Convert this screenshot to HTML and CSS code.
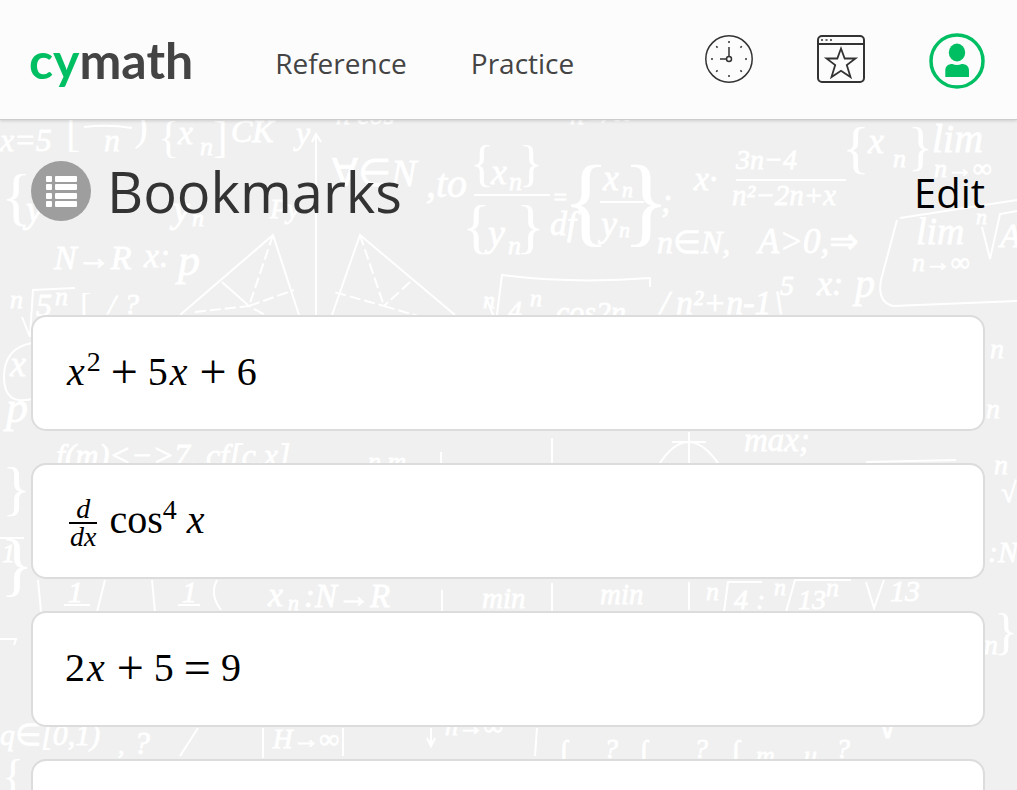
FILE: index.html
```html
<!DOCTYPE html>
<html lang="en">
<head>
    <meta charset="UTF-8">
    <meta name="viewport" content="width=device-width, initial-scale=1.0">
    <title>Bookmarks - Cymath</title>
    <link rel="stylesheet" href="styles.css">
</head>
<body>
    <header class="topbar">
        <a class="logo" href="#"><span class="logo-cy">cy</span>math</a>
        <nav class="nav">
            <a class="nav-link" href="#">Reference</a>
            <a class="nav-link" href="#">Practice</a>
        </nav>
        <div class="tools">
            <a class="tool" href="#" aria-label="History">
                <svg width="48" height="50" viewBox="0 0 48 50" fill="none" stroke="#333" stroke-width="1.5">
                    <circle cx="24" cy="24" r="23.2"/>
                    <circle cx="24" cy="24" r="2.5"/>
                    <path d="M24 12v9.5M15 24h6.5"/>
                    <path d="M24 6v2M24 40v2M6 24h2M40 24h2M11.2 11.2l1.4 1.4M35.4 35.4l1.4 1.4M36.8 11.2l-1.4 1.4M12.6 35.4l-1.4 1.4"/>
                </svg>
            </a>
            <a class="tool" href="#" aria-label="Bookmarks">
                <svg width="48" height="50" viewBox="0 0 48 50" fill="none" stroke="#333" stroke-width="2">
                    <rect x="1" y="1" width="46" height="46" rx="4"/>
                    <path d="M1 9h46"/>
                    <path d="M4 5h2M8.500 5h2M13 5h2" stroke-width="1.700"/>
                    <path d="M24 13.500l3.700 10h10.800l-8.700 6.600 3.700 12-9.500-6.300-9.500 6.300 3.700-12-8.700-6.600h10.800z" stroke-width="1.800"/>
                </svg>
            </a>
            <a class="tool" href="#" aria-label="Account">
                <svg width="56" height="54" viewBox="0 1 56 54" overflow="visible" fill="#00bf63">
                    <circle cx="28" cy="29" r="26" fill="none" stroke="#00bf63" stroke-width="3.500"/>
                    <ellipse cx="28" cy="20.500" rx="8.200" ry="9"/>
                    <path d="M16.300 45v-6.500c0-4.500 3.200-6.500 7-6.500 3 1.300 6.400 1.300 9.400 0 4 0 7.300 2 7.300 6.500V45z"/>
                </svg>
            </a>
        </div>
    </header>

    <main class="page">
        <!-- chalkboard backdrop -->
        <svg class="board" viewBox="0 0 1017 670" preserveAspectRatio="xMinYMin slice" aria-hidden="true">
            <g class="chalk-lines">
                <path d="M84 7q24-3 48 1M316 195V16M312 22l4-8 5 8M180 195l93-80 26 80M222 162l27 24"/>
                <path d="M273 115l-24 71 45-16M195 192l54-6 18 10M360 115l24 71M410 162l-26 24-50-14M384 186l34 10" stroke-dasharray="11 4"/>
                <path d="M332 195l28-80 95 80"/>
                <path d="M474 75h76M600 82h44M736 60h110M900 98l117-18M897 100l-16 60q-4 22 12 26l124-5M982 107l8 32 10-45 17-3"/>
                <path d="M22 197l8 20 3-47 42-2M487 180l9 22 6-47q70 9 148 3v9"/>
                <path d="M32 223q-28 5-28 34t28 22M0 418h24M64 485h26M178 485h22M38 460l3 32M105 460l-8 32M152 460l3 32M217 460q-8 14 4 30M442 470v24M552 463v28M689 462v28"/>
                <path d="M658 346q30-48 62 0M672 322h34M689 312v34M866 462l8 26 10-28M724 492l4-30h34M786 492l9-32h56M866 342l90-2"/>
                <path d="M0 519h16l-2 6M263 608v30M343 608v28M431 608v18M427 618l4 8 4-8M537 608l-2 28M198 608l-18 28M441 332v13M552 318v26"/>
            </g>
            <g class="chalk">
                <text x="0" y="31" font-size="32">x=5</text>
                <text x="104" y="31" font-size="32">n</text>
                <text x="178" y="24" font-size="34">x</text>
                <text x="200" y="35" font-size="26">n</text>
                <text x="231" y="22" font-size="32">CK</text>
                <text x="296" y="24" font-size="32">y</text>
                <text x="26" y="102" font-size="38">y</text>
                <text x="173" y="102" font-size="38">y</text>
                <text x="192" y="106" font-size="24">n</text>
                <text x="270" y="98" font-size="28">Py</text>
                <text x="332" y="66" font-size="38">∀∈N</text>
                <text x="426" y="77" font-size="40">,to</text>
                <text x="491" y="64" font-size="36">x</text>
                <text x="509" y="70" font-size="26">n</text>
                <text x="488" y="126" font-size="38">y</text>
                <text x="508" y="134" font-size="26">n</text>
                <text x="552" y="85" font-size="24">=</text>
                <text x="550" y="115" font-size="34">df</text>
                <text x="603" y="70" font-size="36">x</text>
                <text x="622" y="77" font-size="22">n</text>
                <text x="601" y="116" font-size="36">y</text>
                <text x="619" y="117" font-size="22">n</text>
                <text x="661" y="92" font-size="34">;</text>
                <text x="694" y="70" font-size="34">x·</text>
                <text x="736" y="49" font-size="28">3n−4</text>
                <text x="732" y="85" font-size="29">n²−2n+x</text>
                <text x="868" y="33" font-size="36">x</text>
                <text x="893" y="47" font-size="26">n</text>
                <text x="932" y="32" font-size="40">lim</text>
                <text x="934" y="57" font-size="26">n→∞</text>
                <text x="657" y="133" font-size="32">n∈N,</text>
                <text x="758" y="133" font-size="35">A&gt;0,⇒</text>
                <text x="916" y="124" font-size="38">lim</text>
                <text x="976" y="104" font-size="22">n</text>
                <text x="1000" y="127" font-size="34">A</text>
                <text x="912" y="151" font-size="26">n→∞</text>
                <text x="54" y="149" font-size="34">N→R</text>
                <text x="144" y="147" font-size="34">x:</text>
                <text x="178" y="155" font-size="44">p</text>
                <text x="10" y="188" font-size="26">n</text>
                <text x="36" y="196" font-size="32">5</text>
                <text x="55" y="185" font-size="26">n</text>
                <text x="108" y="194" font-size="28">/</text>
                <text x="124" y="194" font-size="30">?</text>
                <text x="483" y="188" font-size="24">n</text>
                <text x="508" y="200" font-size="28">4</text>
                <text x="530" y="186" font-size="24">n</text>
                <text x="556" y="202" font-size="30">cos2n</text>
                <text x="660" y="194" font-size="34">/</text>
                <text x="676" y="194" font-size="34">n²+n-1</text>
                <text x="774" y="194" font-size="34">\</text>
                <text x="780" y="175" font-size="28">5</text>
                <text x="817" y="175" font-size="34">x:</text>
                <text x="855" y="177" font-size="40">p</text>
                <text x="10" y="256" font-size="36">x</text>
                <text x="6" y="302" font-size="44">p</text>
                <text x="990" y="238" font-size="28">n</text>
                <text x="986" y="298" font-size="28">n</text>
                <text x="56" y="346" font-size="32">f(m)&lt;−&gt;7, cf[c,x]</text>
                <text x="368" y="350" font-size="26">n m</text>
                <text x="744" y="331" font-size="33">max;</text>
                <text x="994" y="354" font-size="28">n</text>
                <text x="1001" y="382" font-size="28">√</text>
                <text x="988" y="442" font-size="30">:N</text>
                <text x="2" y="442" font-size="26">1</text>
                <text x="68" y="482" font-size="30">1</text>
                <text x="182" y="482" font-size="30">1</text>
                <text x="268" y="486" font-size="34">x</text>
                <text x="288" y="490" font-size="22">n</text>
                <text x="304" y="487" font-size="33">:N→R</text>
                <text x="482" y="488" font-size="29">min</text>
                <text x="600" y="484" font-size="29">min</text>
                <text x="706" y="480" font-size="26">n</text>
                <text x="734" y="489" font-size="28">4</text>
                <text x="756" y="489" font-size="28">:</text>
                <text x="774" y="475" font-size="24">n</text>
                <text x="798" y="489" font-size="28">13</text>
                <text x="826" y="476" font-size="26">n</text>
                <text x="890" y="481" font-size="30">13</text>
                <text x="984" y="534" font-size="28">n</text>
                <text x="0" y="625" font-size="30">q∈[0,1)</text>
                <text x="118" y="634" font-size="26">,</text>
                <text x="134" y="634" font-size="32">?</text>
                <text x="273" y="628" font-size="27">H→∞</text>
                <text x="445" y="615" font-size="26">n→∞</text>
                <text x="560" y="640" font-size="28">∫</text>
                <text x="604" y="638" font-size="28">?</text>
                <text x="640" y="640" font-size="28">∫</text>
                <text x="694" y="638" font-size="28">?</text>
                <text x="732" y="640" font-size="28">∫</text>
                <text x="756" y="644" font-size="26">m</text>
                <text x="804" y="644" font-size="26">u</text>
                <text x="836" y="638" font-size="28">?</text>
                <text x="878" y="618" font-size="26">∨</text>
                <text x="336" y="4" font-size="28">n cos</text>
                <text x="570" y="4" font-size="28">n→∞</text>
            </g>
            <g class="brackets">
                <text x="66" y="26" font-size="42">[</text>
                <text x="134" y="20" font-size="42">)</text>
                <text x="158" y="32" font-size="44">{</text>
                <text x="213" y="32" font-size="44">]</text>
                <text x="1" y="98" font-size="64">{</text>
                <text x="470" y="60" font-size="50">{</text>
                <text x="519" y="60" font-size="50">}</text>
                <text x="462" y="126" font-size="60">{</text>
                <text x="516" y="126" font-size="60">}</text>
                <text x="562" y="114" font-size="100">{</text>
                <text x="622" y="114" font-size="100">}</text>
                <text x="842" y="47" font-size="58">{</text>
                <text x="908" y="44" font-size="52">}</text>
                <text x="80" y="196" font-size="34">[</text>
                <text x="2" y="388" font-size="60">}</text>
                <text x="0" y="468" font-size="70">}</text>
                <text x="994" y="528" font-size="50">}</text>
                <text x="2" y="672" font-size="46">{</text>
            </g>
        </svg>

        <div class="title-row">
            <h1 class="title">
                <svg class="title-icon" width="60" height="60" viewBox="0 0 60 60" aria-hidden="true">
                    <circle cx="30" cy="30" r="30" fill="#9e9e9e"/>
                    <g fill="#fff">
                        <rect x="15" y="15" width="6" height="6" rx="1"/>
                        <rect x="24" y="15" width="22" height="6" rx="1"/>
                        <rect x="15" y="23" width="6" height="6" rx="1"/>
                        <rect x="24" y="23" width="22" height="6" rx="1"/>
                        <rect x="15" y="32" width="6" height="6" rx="1"/>
                        <rect x="24" y="32" width="22" height="6" rx="1"/>
                        <rect x="15" y="40" width="6" height="6" rx="1"/>
                        <rect x="24" y="40" width="22" height="6" rx="1"/>
                    </g>
                </svg>
                Bookmarks
            </h1>
            <button class="edit" type="button">Edit</button>
        </div>

        <div class="cards">
            <a class="card" href="#"><span class="math"><i>x</i><sup>2</sup><b class="op">+</b>5<i>x</i><b class="op">+</b>6</span></a>
            <a class="card" href="#"><span class="math math-frac"><span class="frac"><i>d</i><span class="denominator"><i>dx</i></span></span><span class="func">cos<sup>4</sup></span><i>x</i></span></a>
            <a class="card" href="#"><span class="math">2<i>x</i><b class="op">+</b>5<b class="op">=</b>9</span></a>
            <a class="card" href="#" aria-label="Next bookmark"></a>
        </div>
    </main>
</body>
</html>
```
FILE: styles.css
```css
* {
    box-sizing: border-box;
}
html {
    height: 100%;
}
body {
    margin: 0;
    height: 100%;
    display: flex;
    flex-direction: column;
    overflow: hidden;
    font-family: "Open Sans", "Noto Sans", sans-serif;
    background: #f0f0f0;
    color: #333;
}
a {
    color: inherit;
    text-decoration: none;
}
.topbar {
    position: relative;
    z-index: 1;
    flex: none;
    display: flex;
    align-items: center;
    height: 120px;
    padding: 0 32px 0 29px;
    background: #fcfcfc;
    border-bottom: 1px solid #ccc;
    box-shadow: 0 1px 3px rgba(0,0,0,0.15);
}
.logo {
    font-family: Lato, sans-serif;
    font-size: 50px;
    font-weight: bold;
    color: #444;
}
.logo-cy {
    color: #00bf63;
}
.nav {
    display: flex;
    gap: 64px;
    margin-left: 82px;
    padding-top: 6px;
}
.nav-link {
    font-size: 28px;
    color: #444;
}
.tools {
    display: flex;
    align-items: center;
    gap: 64px;
    margin-left: auto;
}
.tool svg {
    display: block;
}
.page {
    position: relative;
    flex: 1;
    min-height: 0;
    overflow: hidden;
    padding: 40px 32px 0 31px;
}
.board {
    position: absolute;
    top: 0;
    left: 0;
    width: 100%;
    height: 100%;
}
.chalk,
.brackets {
    fill: #fff;
    font-family: "Liberation Serif", "DejaVu Sans", serif;
}
.chalk {
    stroke: #fff;
    stroke-width: 0.8;
    font-style: italic;
}
.chalk-lines {
    fill: none;
    stroke: #fff;
    stroke-width: 2;
}
.title-row {
    position: relative;
    display: flex;
    align-items: center;
    justify-content: space-between;
    height: 62px;
}
.title {
    display: flex;
    align-items: center;
    gap: 16px;
    margin: 0;
    font-size: 56px;
    font-weight: normal;
}
.edit {
    padding: 2px 0 0;
    border: none;
    background: none;
    font-family: inherit;
    font-size: 40px;
    color: #000;
    cursor: pointer;
}
.cards {
    position: relative;
    display: flex;
    flex-direction: column;
    gap: 32px;
    margin-top: 93px;
}
.card {
    display: flex;
    align-items: center;
    flex: none;
    height: 116px;
    padding: 0 32px 2px;
    background: #fff;
    border: 2px solid #dcdcdc;
    border-radius: 15px;
    color: #000;
}
.math {
    font-family: "Liberation Serif", serif;
    font-size: 40px;
    line-height: 48px;
    white-space: nowrap;
}
.math i {
    padding: 0 2px;
}
.math sup {
    font-size: 28px;
    line-height: 0;
    vertical-align: 14px;
}
.math-frac {
    padding-top: 6px;
}
.op {
    margin: 0 10px;
    font-size: 48px;
    font-weight: normal;
    line-height: 40px;
    vertical-align: -3px;
}
.frac {
    display: inline-flex;
    flex-direction: column;
    align-items: center;
    margin: 0 12px 0 4px;
    font-size: 28px;
    line-height: 26px;
    vertical-align: middle;
}
.frac i {
    padding: 0 1px;
}
.denominator {
    border-top: 2px solid #000;
}
.func {
    margin-right: 8px;
}
```
